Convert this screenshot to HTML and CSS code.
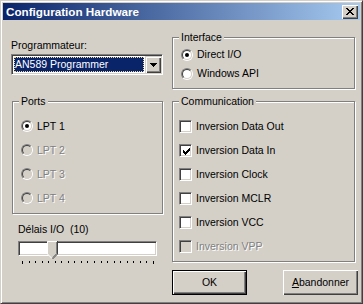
FILE: index.html
```html
<!DOCTYPE html>
<html lang="fr">
<head>
<meta charset="utf-8">
<title>Configuration Hardware</title>
<link rel="stylesheet" href="styles.css">
</head>
<body>
<div class="window">
  <div class="titlebar">
    <span class="title">Configuration Hardware</span>
    <span class="close-btn"><svg width="8" height="7" viewBox="0 0 8 7"><path d="M0 0h2v1H0zM6 0h2v1H6zM1 1h2v1H1zM5 1h2v1H5zM2 2h4v1H2zM3 3h2v1H3zM2 4h4v1H2zM1 5h2v1H1zM5 5h2v1H5zM0 6h2v1H0zM6 6h2v1H6z" fill="#000"/></svg></span>
  </div>
  <div class="body">
    <div class="col-left">
      <div class="prog-label">Programmateur:</div>
      <div class="combo">
        <div class="combo-field"><span class="combo-sel">AN589 Programmer</span></div>
        <div class="combo-btn"><svg width="7" height="4" viewBox="0 0 7 4"><path d="M0 0h7v1H0zM1 1h5v1H1zM2 2h3v1H2zM3 3h1v1H3z" fill="#000"/></svg></div>
      </div>
      <div class="group group-ports">
        <div class="legend">Ports</div>
        <div class="opts">
          <div class="opt"><span class="radio"><span class="radio-in"><span class="dot"></span></span></span><span class="opt-text">LPT 1</span></div>
          <div class="opt disabled"><span class="radio"><span class="radio-in"></span></span><span class="opt-text">LPT 2</span></div>
          <div class="opt disabled"><span class="radio"><span class="radio-in"></span></span><span class="opt-text">LPT 3</span></div>
          <div class="opt disabled"><span class="radio"><span class="radio-in"></span></span><span class="opt-text">LPT 4</span></div>
        </div>
      </div>
      <div class="delay-label">Délais I/O&nbsp; (10)</div>
      <div class="slider">
        <div class="track"></div>
        <svg class="thumb" width="11" height="18" viewBox="0 0 11 18">
          <path d="M0 0H11V13L5.5 18L0 13Z" fill="#D4D0C8"/>
          <path d="M0.5 13V0.5H10" stroke="#fff" fill="none"/>
          <path d="M0.5 13L5 17.5" stroke="#fff" fill="none"/>
          <path d="M10.5 0V13L5.5 18" stroke="#404040" fill="none"/>
          <path d="M9.5 1V12.6L5.5 16.6" stroke="#808080" fill="none"/>
        </svg>
        <div class="ticks">
          <span class="tick long"></span><span class="tick"></span><span class="tick"></span><span class="tick"></span><span class="tick"></span><span class="tick"></span><span class="tick"></span><span class="tick"></span><span class="tick"></span><span class="tick"></span><span class="tick"></span><span class="tick"></span><span class="tick"></span><span class="tick"></span><span class="tick"></span><span class="tick"></span><span class="tick"></span><span class="tick"></span><span class="tick"></span><span class="tick"></span><span class="tick long"></span>
        </div>
      </div>
    </div>
    <div class="col-right">
      <div class="group group-iface">
        <div class="legend">Interface</div>
        <div class="opts">
          <div class="opt"><span class="radio"><span class="radio-in"><span class="dot"></span></span></span><span class="opt-text">Direct I/O</span></div>
          <div class="opt"><span class="radio"><span class="radio-in"></span></span><span class="opt-text">Windows API</span></div>
        </div>
      </div>
      <div class="group group-comm">
        <div class="legend">Communication</div>
        <div class="opts">
          <div class="opt"><span class="check"></span><span class="opt-text">Inversion Data Out</span></div>
          <div class="opt"><span class="check"><svg width="7" height="7" viewBox="0 0 7 7"><path d="M6 0h1v1H6zM5 1h2v1H5zM0 2h1v1H0zM4 2h3v1H4zM0 3h2v1H0zM3 3h3v1H3zM0 4h5v1H0zM1 5h3v1H1zM2 6h1v1H2z" fill="#000"/></svg></span><span class="opt-text">Inversion Data In</span></div>
          <div class="opt"><span class="check"></span><span class="opt-text">Inversion Clock</span></div>
          <div class="opt"><span class="check"></span><span class="opt-text">Inversion MCLR</span></div>
          <div class="opt"><span class="check"></span><span class="opt-text">Inversion VCC</span></div>
          <div class="opt disabled"><span class="check"></span><span class="opt-text">Inversion VPP</span></div>
        </div>
      </div>
      <div class="buttons">
        <div class="btn btn-default">OK</div>
        <div class="btn"><span class="ul">A</span>bandonner</div>
      </div>
    </div>
  </div>
</div>
</body>
</html>
```
FILE: styles.css
```css
* { box-sizing: border-box; }
html, body { margin: 0; padding: 0; }
body {
  width: 363px;
  height: 304px;
  background: #D4D0C8;
  font-family: "Liberation Sans", Arial, sans-serif;
  font-size: 10.5px;
  line-height: 13px;
  color: #000;
  overflow: hidden;
}
.window {
  width: 363px;
  height: 304px;
  border: 1px solid;
  border-color: #D4D0C8 #404040 #404040 #D4D0C8;
  box-shadow: inset 1px 1px #fff, inset -1px -1px #808080;
  padding: 2px;
  background: #D4D0C8;
  display: flex;
  flex-direction: column;
}
.titlebar {
  height: 17px;
  flex: none;
  background: linear-gradient(to right, #0A246A, #A6CAF0);
  display: flex;
  align-items: center;
  justify-content: space-between;
  padding: 0 2px 0 3px;
}
.title {
  color: #fff;
  font-weight: bold;
  font-size: 11.7px;
  line-height: 14px;
}
.close-btn {
  width: 16px;
  height: 14px;
  background: #D4D0C8;
  box-shadow: inset 1px 1px #fff, inset -1px -1px #404040, inset -2px -2px #808080;
  display: flex;
  align-items: center;
  justify-content: center;
}
.close-btn svg { display: block; }
.body {
  display: flex;
  padding-left: 8px;
}
.col-left { width: 152px; flex: none; }
.col-right { width: 187px; flex: none; margin-left: 9px; margin-top: 17px; }

.prog-label { margin-top: 19px; }
.combo {
  margin-top: 2px;
  width: 152px;
  height: 21px;
  border: 1px solid;
  border-color: #808080 #fff #fff #808080;
  box-shadow: inset 1px 1px #404040, inset -1px -1px #D4D0C8;
  padding: 1px;
  background: #fff;
  display: flex;
}
.combo-field { flex: 1; padding: 1px; }
.combo-sel {
  display: block;
  height: 100%;
  background: #0A246A;
  color: #fff;
  padding-left: 1px;
  line-height: 15px;
  outline: 1px dotted #F5DB95;
  outline-offset: -1px;
}
.combo-btn {
  width: 16px;
  height: 17px;
  background: #D4D0C8;
  box-shadow: inset 1px 1px #D4D0C8, inset 2px 2px #fff, inset -1px -1px #404040, inset -2px -2px #808080;
  display: flex;
  align-items: center;
  justify-content: center;
}
.combo-btn svg { display: block; }

.group {
  border: 1px solid #808080;
  box-shadow: inset 1px 1px #fff, 1px 1px #fff;
}
.legend {
  width: fit-content;
  margin: -7px 0 0 6px;
  padding: 0 2px;
  background: #D4D0C8;
  line-height: 13px;
}
.group-ports { margin-top: 26px; margin-left: 1px; width: 151px; padding-bottom: 3px; }
.group-ports .opts { margin-top: 6px; }
.group-ports .opt { height: 24px; padding-left: 8px; }

.group-iface { width: 183px; padding-bottom: 5px; }
.group-iface .opts { margin-top: 1px; }
.group-iface .opt { height: 19px; padding-left: 8px; }

.group-comm { width: 183px; margin-top: 12px; padding-bottom: 3px; }
.group-comm .opts { margin-top: 6px; }
.group-comm .opt { height: 24px; padding-left: 6px; }

.opt { display: flex; align-items: center; }
.opt-text { margin-left: 4px; white-space: nowrap; }
.opt.disabled .opt-text { color: #808080; text-shadow: 1px 1px 0 #fff; }

.radio {
  width: 12px;
  height: 12px;
  border-radius: 50%;
  border: 1px solid;
  border-color: #808080 #fff #fff #808080;
  flex: none;
}
.radio-in {
  display: flex;
  align-items: center;
  justify-content: center;
  width: 10px;
  height: 10px;
  border-radius: 50%;
  border: 1px solid;
  border-color: #404040 #D4D0C8 #D4D0C8 #404040;
  background: #fff;
}
.disabled .radio-in { background: #D4D0C8; }
.dot { width: 4px; height: 4px; border-radius: 50%; background: #000; }

.check {
  width: 13px;
  height: 13px;
  flex: none;
  border: 1px solid;
  border-color: #808080 #fff #fff #808080;
  box-shadow: inset 1px 1px #404040, inset -1px -1px #D4D0C8;
  background: #fff;
  padding: 3px 0 0 3px;
}
.check svg { display: block; }
.disabled .check { background: #D4D0C8; }

.delay-label { margin-top: 9px; margin-left: 7px; white-space: nowrap; }
.slider { position: relative; margin-top: 5px; margin-left: 7px; width: 139px; }
.track {
  height: 15px;
  border: 1px solid;
  border-color: #808080 #fff #fff #808080;
  box-shadow: inset 1px 1px #404040, inset -1px -1px #D4D0C8;
  background: #fff;
}
.thumb { position: absolute; left: 29px; top: 0; display: block; }
.ticks {
  margin-top: 5px;
  margin-left: 4px;
  width: 132px;
  height: 4px;
  display: flex;
  justify-content: space-between;
  align-items: flex-start;
}
.tick { width: 1px; height: 2px; background: #000; }
.tick.long { height: 3px; }

.buttons {
  margin-top: 8px;
  width: 186px;
  display: flex;
  justify-content: space-between;
}
.btn {
  width: 75px;
  height: 25px;
  display: flex;
  align-items: center;
  justify-content: center;
  background: #D4D0C8;
  box-shadow: inset 1px 1px #fff, inset -1px -1px #404040, inset -2px -2px #808080;
}
.btn-default {
  border: 1px solid #000;
}
.ul { text-decoration: underline; }
```
